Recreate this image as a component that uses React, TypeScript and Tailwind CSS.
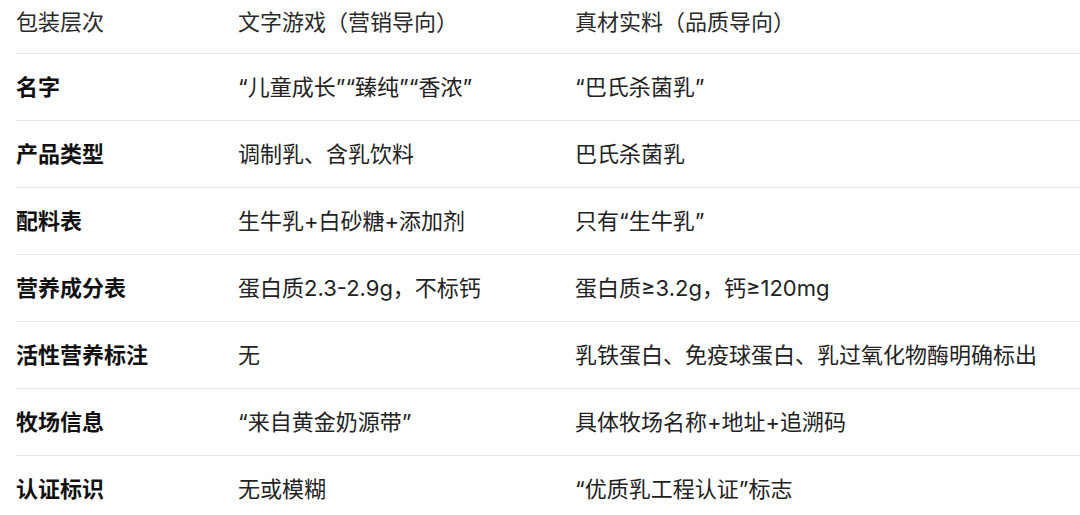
const rows: [string, string, string][] = [
  ['名字', '“儿童成长”“臻纯”“香浓”', '“巴氏杀菌乳”'],
  ['产品类型', '调制乳、含乳饮料', '巴氏杀菌乳'],
  ['配料表', '生牛乳+白砂糖+添加剂', '只有“生牛乳”'],
  ['营养成分表', '蛋白质2.3-2.9g，不标钙', '蛋白质≥3.2g，钙≥120mg'],
  ['活性营养标注', '无', '乳铁蛋白、免疫球蛋白、乳过氧化物酶明确标出'],
  ['牧场信息', '“来自黄金奶源带”', '具体牧场名称+地址+追溯码'],
  ['认证标识', '无或模糊', '“优质乳工程认证”标志'],
];

export default function App() {
  return (
    <div
      className="w-[1080px] h-[515px] overflow-hidden bg-white pl-4 text-[#222]"
      style={{ fontFamily: 'Inter, "Noto Sans CJK SC", sans-serif' }}
    >
      <table className="w-full border-collapse table-fixed">
        <thead>
          <tr className="border-b border-[#e8e8e8]">
            <th className="w-[222px] h-[53px] pt-2 align-top text-left text-[22px] font-normal leading-[28px] text-[#2a2a2a]">
              包装层次
            </th>
            <th className="w-[337px] h-[53px] pt-2 align-top text-left text-[22px] font-normal leading-[28px] text-[#2a2a2a]">
              文字游戏（营销导向）
            </th>
            <th className="h-[53px] pt-2 align-top text-left text-[22px] font-normal leading-[28px] text-[#2a2a2a]">
              真材实料（品质导向）
            </th>
          </tr>
        </thead>
        <tbody>
          {rows.map((row, i) => (
            <tr key={i} className={i < rows.length - 1 ? 'border-b border-[#e8e8e8]' : ''}>
              <td className="h-[67px] align-middle text-[22px] font-bold text-[#111] leading-[28px]">{row[0]}</td>
              <td className="h-[67px] align-middle text-[22px] leading-[28px]">{row[1]}</td>
              <td className="h-[67px] align-middle text-[22px] leading-[28px] whitespace-nowrap">{row[2]}</td>
            </tr>
          ))}
        </tbody>
      </table>
    </div>
  );
}
